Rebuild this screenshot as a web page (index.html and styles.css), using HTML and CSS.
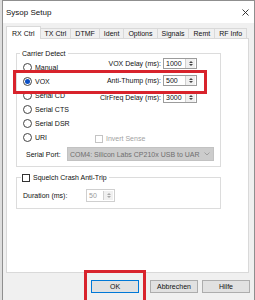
FILE: index.html
```html
<!DOCTYPE html>
<html lang="de">
<head>
    <meta charset="UTF-8">
    <meta name="viewport" content="width=device-width, initial-scale=1.0">
    <title>Sysop Setup</title>
    <link rel="stylesheet" href="styles.css">
</head>
<body>
    <div class="window">
        <div class="titlebar">
            <span class="title">Sysop Setup</span>
            <svg class="close" width="7" height="7" viewBox="0 0 7 7">
                <path d="M0.5 0.5 L6.5 6.5 M6.5 0.5 L0.5 6.5" stroke="#222" stroke-width="0.9" fill="none"/>
            </svg>
        </div>
        <div class="dialog">
            <div class="tabs">
                <div class="tab active">RX Ctrl</div>
                <div class="tab">TX Ctrl</div>
                <div class="tab">DTMF</div>
                <div class="tab">Ident</div>
                <div class="tab">Options</div>
                <div class="tab">Signals</div>
                <div class="tab">Remt</div>
                <div class="tab">RF Info</div>
            </div>
            <div class="panel">
                <fieldset class="group carrier">
                    <legend>Carrier Detect</legend>
                    <div class="carrier-body">
                        <div class="radios">
                            <div class="radio-row"><span class="radio"></span>Manual</div>
                            <div class="radio-row"><span class="radio checked"></span>VOX</div>
                            <div class="radio-row"><span class="radio"></span>Serial CD</div>
                            <div class="radio-row"><span class="radio"></span>Serial CTS</div>
                            <div class="radio-row"><span class="radio"></span>Serial DSR</div>
                            <div class="radio-row"><span class="radio"></span>URI</div>
                        </div>
                        <div class="fields">
                            <div class="field-row">
                                <span class="field-label">VOX Delay (ms):</span>
                                <div class="spinbox"><span class="value">1000</span><span class="spin"></span></div>
                            </div>
                            <div class="field-row">
                                <span class="field-label">Anti-Thump (ms):</span>
                                <div class="spinbox"><span class="value">500</span><span class="spin"></span></div>
                            </div>
                            <div class="field-row">
                                <span class="field-label">ClrFreq Delay (ms):</span>
                                <div class="spinbox"><span class="value">3000</span><span class="spin"></span></div>
                            </div>
                            <div class="check-row disabled"><span class="checkbox"></span>Invert Sense</div>
                        </div>
                    </div>
                    <div class="port-row">
                        <span class="port-label">Serial Port:</span>
                        <div class="combo">
                            <span class="combo-text">COM4: Silicon Labs CP210x USB to UAR</span>
                            <svg class="combo-arrow" width="6" height="4" viewBox="0 0 6 4">
                                <path d="M0.5 0.5 L3 3 L5.5 0.5" stroke="#9a9a9a" stroke-width="0.9" fill="none"/>
                            </svg>
                        </div>
                    </div>
                </fieldset>
                <fieldset class="group squelch">
                    <legend><span class="checkbox"></span>Squelch Crash Anti-Trip</legend>
                    <div class="duration-row">
                        <span class="duration-label">Duration (ms):</span>
                        <div class="spinbox small disabled"><span class="value">50</span><span class="spin"></span></div>
                    </div>
                </fieldset>
            </div>
            <div class="buttons">
                <button class="btn default">OK</button>
                <button class="btn">Abbrechen</button>
                <button class="btn">Hilfe</button>
            </div>
        </div>
    </div>
    <div class="highlight hl-vox"></div>
    <div class="highlight hl-ok"></div>
</body>
</html>
```

FILE: styles.css
```css
* {
    box-sizing: border-box;
}
body {
    margin: 0;
    width: 255px;
    height: 300px;
    overflow: hidden;
    background-color: #dedede;
    font-family: "Liberation Sans", Arial, sans-serif;
    font-size: 7px;
    color: #111;
}
.window {
    margin-left: 2px;
    width: 253px;
    height: 300px;
    border: 1px solid #8f8f8f;
    border-bottom: none;
    background-color: #f0f0f0;
}
.titlebar {
    height: 22px;
    background-color: #fff;
    display: flex;
    align-items: center;
    justify-content: space-between;
    padding: 0 5px 0 3px;
}
.title {
    font-size: 8px;
    color: #111;
}
.dialog {
    padding-top: 3px;
}
.tabs {
    display: flex;
    align-items: flex-end;
    height: 12px;
    margin-left: 5px;
}
.tab {
    height: 10px;
    line-height: 9px;
    padding: 0 4px;
    margin-left: -1px;
    border: 1px solid #d9d9d9;
    border-bottom: none;
    background-color: #f0f0f0;
}
.tab.active {
    position: relative;
    height: 13px;
    margin-bottom: -1px;
    margin-left: -2px;
    padding: 2px 5px 0;
    background-color: #fff;
}
.panel {
    margin-left: 3px;
    width: 243px;
    height: 235px;
    border: 1px solid #d9d9d9;
    background-color: #fff;
    padding: 10px 0 0 9px;
}
.group {
    margin: 0;
    padding: 0;
    width: 205px;
    border: 1px solid #dcdcdc;
    min-width: 0;
}
.group legend {
    margin-left: 3px;
    padding: 0 2px;
    line-height: 9px;
    display: flex;
    align-items: center;
}
.carrier-body {
    display: flex;
    height: 86px;
    padding-left: 6px;
}
.radios {
    width: 72px;
    padding-top: 2px;
}
.radio-row {
    height: 14px;
    display: flex;
    align-items: center;
}
.radio {
    width: 9px;
    height: 9px;
    border: 1px solid #444;
    border-radius: 50%;
    margin-right: 3px;
    display: flex;
    align-items: center;
    justify-content: center;
}
.radio.checked::after {
    content: "";
    width: 5px;
    height: 5px;
    border-radius: 50%;
    background-color: #0a4fc4;
}
.fields {
    width: 102px;
    display: flex;
    flex-direction: column;
    gap: 6px;
}
.field-row {
    display: flex;
    justify-content: flex-end;
    align-items: center;
    height: 11px;
}
.field-label {
    margin-right: 2px;
}
.spinbox {
    width: 34px;
    height: 11px;
    border: 1px solid #9c9c9c;
    display: flex;
    align-items: center;
    background-color: #fff;
}
.spinbox .value {
    flex: 1;
    padding-left: 2px;
    line-height: 9px;
}
.spin {
    width: 10px;
    height: 9px;
    margin-right: 1px;
    background-color: #f0f0f0;
    border-left: 1px solid #d0d0d0;
    display: flex;
    flex-direction: column;
    align-items: center;
    justify-content: space-around;
    padding: 1px 0;
}
.spin::before,
.spin::after {
    content: "";
    width: 0;
    height: 0;
    border-left: 2px solid transparent;
    border-right: 2px solid transparent;
}
.spin::before {
    border-bottom: 2px solid #444;
}
.spin::after {
    border-top: 2px solid #444;
}
.spinbox.disabled {
    border-color: #cfcfcf;
}
.spinbox.disabled .value {
    color: #9a9a9a;
}
.spinbox.disabled .spin::before {
    border-bottom-color: #a8a8a8;
}
.spinbox.disabled .spin::after {
    border-top-color: #a8a8a8;
}
.check-row {
    display: flex;
    align-items: center;
    margin-top: 25px;
    height: 9px;
}
.checkbox {
    width: 8px;
    height: 8px;
    border: 1px solid #333;
    background-color: #fff;
    margin-right: 3px;
}
.check-row.disabled {
    color: #a2a2a2;
}
.check-row.disabled .checkbox {
    border-color: #c4c4c4;
}
.port-row {
    display: flex;
    align-items: center;
    height: 14px;
    margin-top: 3px;
    margin-bottom: 5px;
    padding-left: 9px;
}
.port-label {
    width: 41px;
}
.combo {
    width: 147px;
    height: 14px;
    background-color: #cccccc;
    border: 1px solid #c2c2c2;
    display: flex;
    align-items: center;
    padding: 0 3px 0 2px;
}
.combo-text {
    flex: 1;
    white-space: nowrap;
    color: #6e6e6e;
}
.combo-arrow {
    margin-left: 2px;
    flex-shrink: 0;
}
.squelch {
    margin-top: 6px;
}
.squelch legend {
    margin-left: 4px;
    padding: 0 2px 0 1px;
}
.duration-row {
    display: flex;
    align-items: center;
    height: 13px;
    margin: 7px 0 6px;
    padding-left: 6px;
}
.duration-label {
    width: 63px;
}
.spinbox.small {
    width: 29px;
    height: 13px;
}
.buttons {
    display: flex;
    justify-content: flex-end;
    gap: 4px;
    margin-top: 7px;
    padding-right: 4px;
}
.btn {
    width: 48px;
    height: 13px;
    padding: 0;
    font-family: inherit;
    font-size: 7px;
    color: #111;
    background-color: #e1e1e1;
    border: 1px solid #adadad;
}
.btn.default {
    margin-right: 7px;
    border-color: #0078d7;
}
.highlight {
    position: absolute;
    border: 3px solid #d8232c;
}
.hl-vox {
    left: 13px;
    top: 70px;
    width: 194px;
    height: 24px;
}
.hl-ok {
    left: 84px;
    top: 270px;
    width: 62px;
    height: 34px;
}
```
